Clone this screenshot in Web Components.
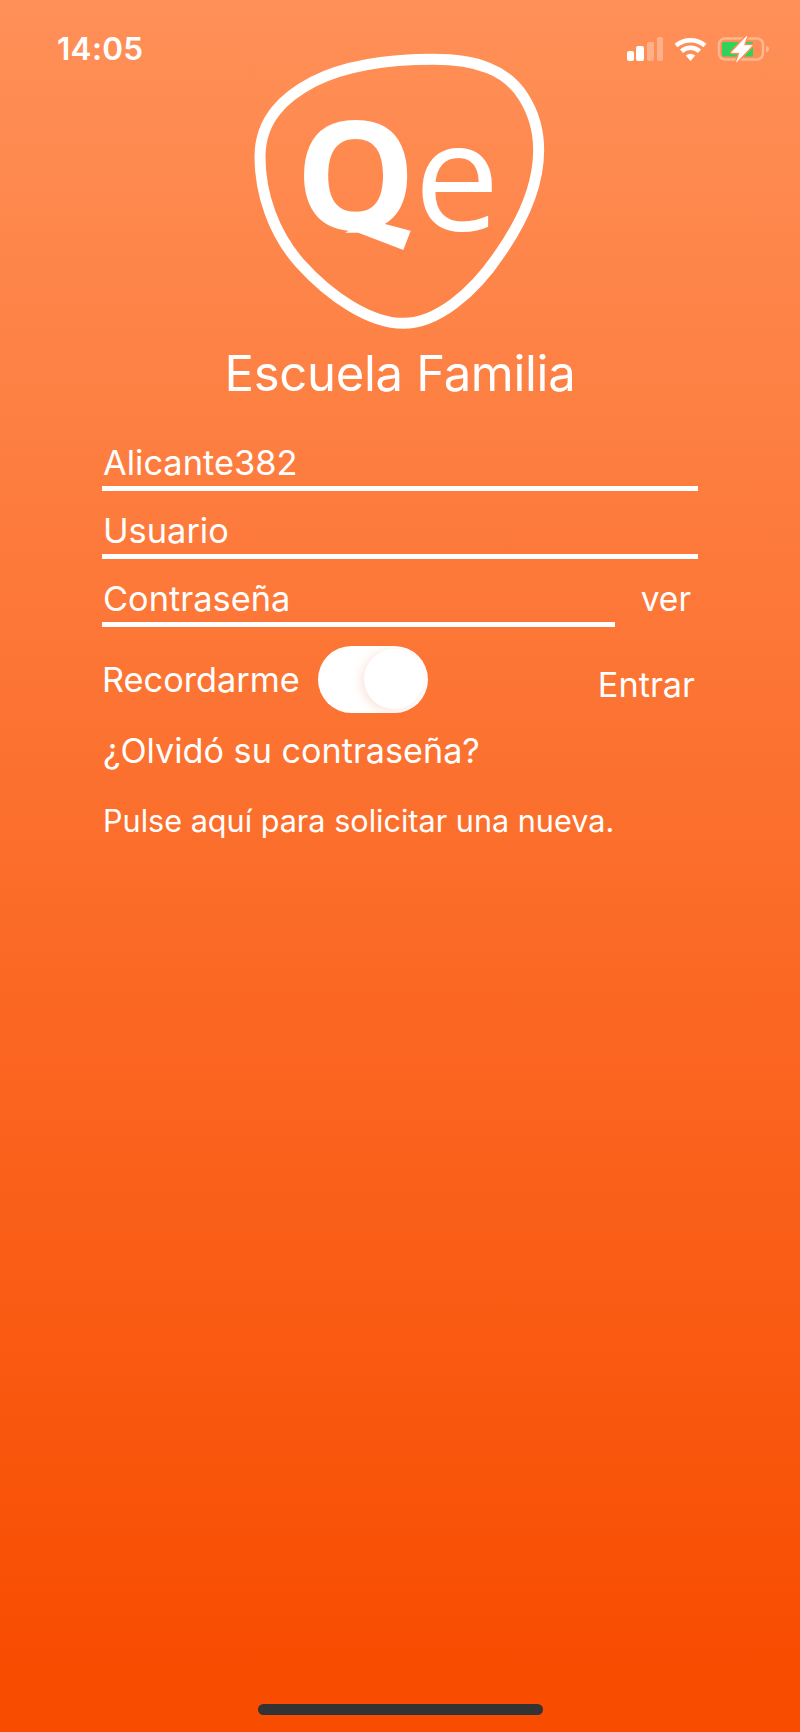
<!DOCTYPE html>
<html lang="es"><head><meta charset="utf-8"><title>Escuela Familia</title>
<style>html,body{margin:0;padding:0}body{font-family:Inter,"Liberation Sans",sans-serif;color:#fff}</style>
</head><body>
<qe-app>
  <qe-status slot="status"></qe-status>
  <qe-logo></qe-logo>
  <qe-title>Escuela Familia</qe-title>
  <qe-form>
    <qe-field>Alicante382</qe-field>
    <qe-field>Usuario</qe-field>
    <qe-field action="ver" short>Contraseña</qe-field>
    <qe-remember></qe-remember>
    <qe-forgot></qe-forgot>
  </qe-form>
  <qe-home></qe-home>
</qe-app>
<script>
function def(name, html, init){
  customElements.define(name, class extends HTMLElement{
    constructor(){super();this.attachShadow({mode:'open'}).innerHTML=html;}
    connectedCallback(){ if(init) init(this); }
  });
}
def('qe-app',`<style>:host{display:flex;flex-direction:column;width:800px;height:1732px;overflow:hidden;
background:linear-gradient(180deg,#ff9058 0%,#f84c00 97%,#f84c00 100%)}</style><slot name="status"></slot><slot></slot>`);
def('qe-status',`<style>:host{display:flex;align-items:center;justify-content:space-between;box-sizing:border-box;height:40px;margin-top:29px;padding:0 30px 0 57px}
.t{font:600 31.5px/40px Inter,sans-serif;letter-spacing:.3px;color:#fff}.i{display:flex;align-items:center}</style>
<span class="t">14:05</span>
<span class="i">
<svg width="143" height="24" viewBox="0 0 143 24" style="display:block;overflow:visible">
<g fill="#fff"><rect x="0" y="14" width="7" height="10" rx="2"/><rect x="9" y="9" width="8" height="15" rx="2"/></g>
<g fill="#fff" fill-opacity=".3"><rect x="20" y="5" width="7" height="19" rx="2"/><rect x="30" y="0" width="6" height="24" rx="2"/></g>
<g fill="none" stroke="#fff" stroke-width="4.500"><path d="M49 8.500a22.500 22.500 0 0 1 29 0"/><path d="M54.500 14.200a13.500 13.500 0 0 1 18 0"/></g>
<path d="M58.800 18.500a7 7 0 0 1 9.400 0L63.500 24z" fill="#fff"/>
<rect x="92" y="1.500" width="44" height="21" rx="6" fill="none" stroke="#fff" stroke-opacity=".35" stroke-width="2.500"/>
<path d="M139 8.500c2 .8 3.200 2 3.200 3.500s-1.200 2.700-3.200 3.500z" fill="#fff" fill-opacity=".35"/>
<rect x="95" y="5" width="31" height="14.500" rx="1.500" fill="#2fd35a"/>
<path d="M119.700 -.7 104.700 15.500H113L109.700 24.700 125 8.500H116.500z" fill="none" stroke="#ff8f57" stroke-width="3.500" stroke-linejoin="round"/>
<path d="M119.700 -.7 104.700 15.500H113L109.700 24.700 125 8.500H116.500z" fill="#fff" stroke="#fff" stroke-width=".8" stroke-linejoin="round"/>
</svg></span>`);
def('qe-logo',`<style>:host{display:block;width:340px;height:300px;margin:-29px 0 0 230px;flex:none}svg{display:block}
text{fill:#fff;font-family:"Open Sans",sans-serif}</style>
<svg width="340" height="300" viewBox="0 0 1020 900" role="img" aria-label="Qe">
<defs><clipPath id="c"><rect x="150" y="180" width="420" height="398"/></clipPath></defs>
<path d="M90 350C90 235 165 170 250 125 350 75 480 58 610 58 740 58 830 90 880 170 915 225 926 280 926 330 926 430 880 540 810 640 730 760 620 850 520 850 420 850 300 770 210 670 130 580 90 460 90 350Z" fill="none" stroke="#fff" stroke-width="33"/>
<text x="196" y="570" font-size="455" font-weight="700" clip-path="url(#c)">Q</text>
<path d="M345 578 385 578 520 630 542 572 462 551 430 530Z" fill="#fff"/>
<text x="552" y="574" font-size="458" font-weight="400">e</text>
</svg>`);
def('qe-title',`<style>:host{display:block;text-align:center;font:400 49px/56px Inter,sans-serif;letter-spacing:-.3px;color:#fff;margin-top:6px}</style><slot></slot>`);
def('qe-form',`<style>:host{display:block;box-sizing:border-box;padding:0 102px;margin-top:21px}</style><slot></slot>`);
def('qe-field',`<style>:host{display:flex;align-items:flex-end;justify-content:space-between;height:68px;font:400 34.4px/40px Inter,sans-serif;color:#fff}
.b{box-sizing:border-box;flex:1;height:50px;border-bottom:5px solid #fff;padding:2px 0 0 1px;line-height:40px}
:host([short]) .b{flex:none;width:513px}
.a{box-sizing:border-box;width:83px;height:50px;padding:2px 7px 0 0;text-align:right;line-height:40px;font-size:33.5px}</style><div class="b"><slot></slot></div><div class="a" id="a"></div>`,
el=>{const a=el.getAttribute('action');const n=el.shadowRoot.getElementById('a');if(a)n.textContent=a;else n.style.display='none';});
def('qe-remember',`<style>:host{display:flex;align-items:center;height:85px;margin-top:10px;font:400 34.3px/40px Inter,sans-serif;color:#fff;width:596px}
.s{position:relative;flex:none;width:110px;height:67px;border-radius:34px;background:#fff;margin-left:18px;box-sizing:border-box}
.k{position:absolute;right:4px;top:3px;width:60px;height:60px;border-radius:50%;background:#fff;box-shadow:-3px 2px 10px rgba(240,130,80,.22)}
.e{margin-left:auto;margin-right:3px;transform:translateY(5px)}</style>
<span>Recordarme</span><div class="s"><div class="k"></div></div><span class="e">Entrar</span>`);
def('qe-forgot',`<style>:host{display:block;color:#fff}
.q{font:400 34.2px/40px Inter,sans-serif;margin-top:9px;padding-left:1px}.p{font:400 30.6px/40px Inter,sans-serif;margin-top:30px;padding-left:1px}</style>
<div class="q">¿Olvidó su contraseña?</div><div class="p">Pulse aquí para solicitar una nueva.</div>`);
def('qe-home',`<style>:host{display:block;width:285px;height:11px;border-radius:6px;background:#333;margin:auto auto 17px}</style>`);
</script>
</body></html>
